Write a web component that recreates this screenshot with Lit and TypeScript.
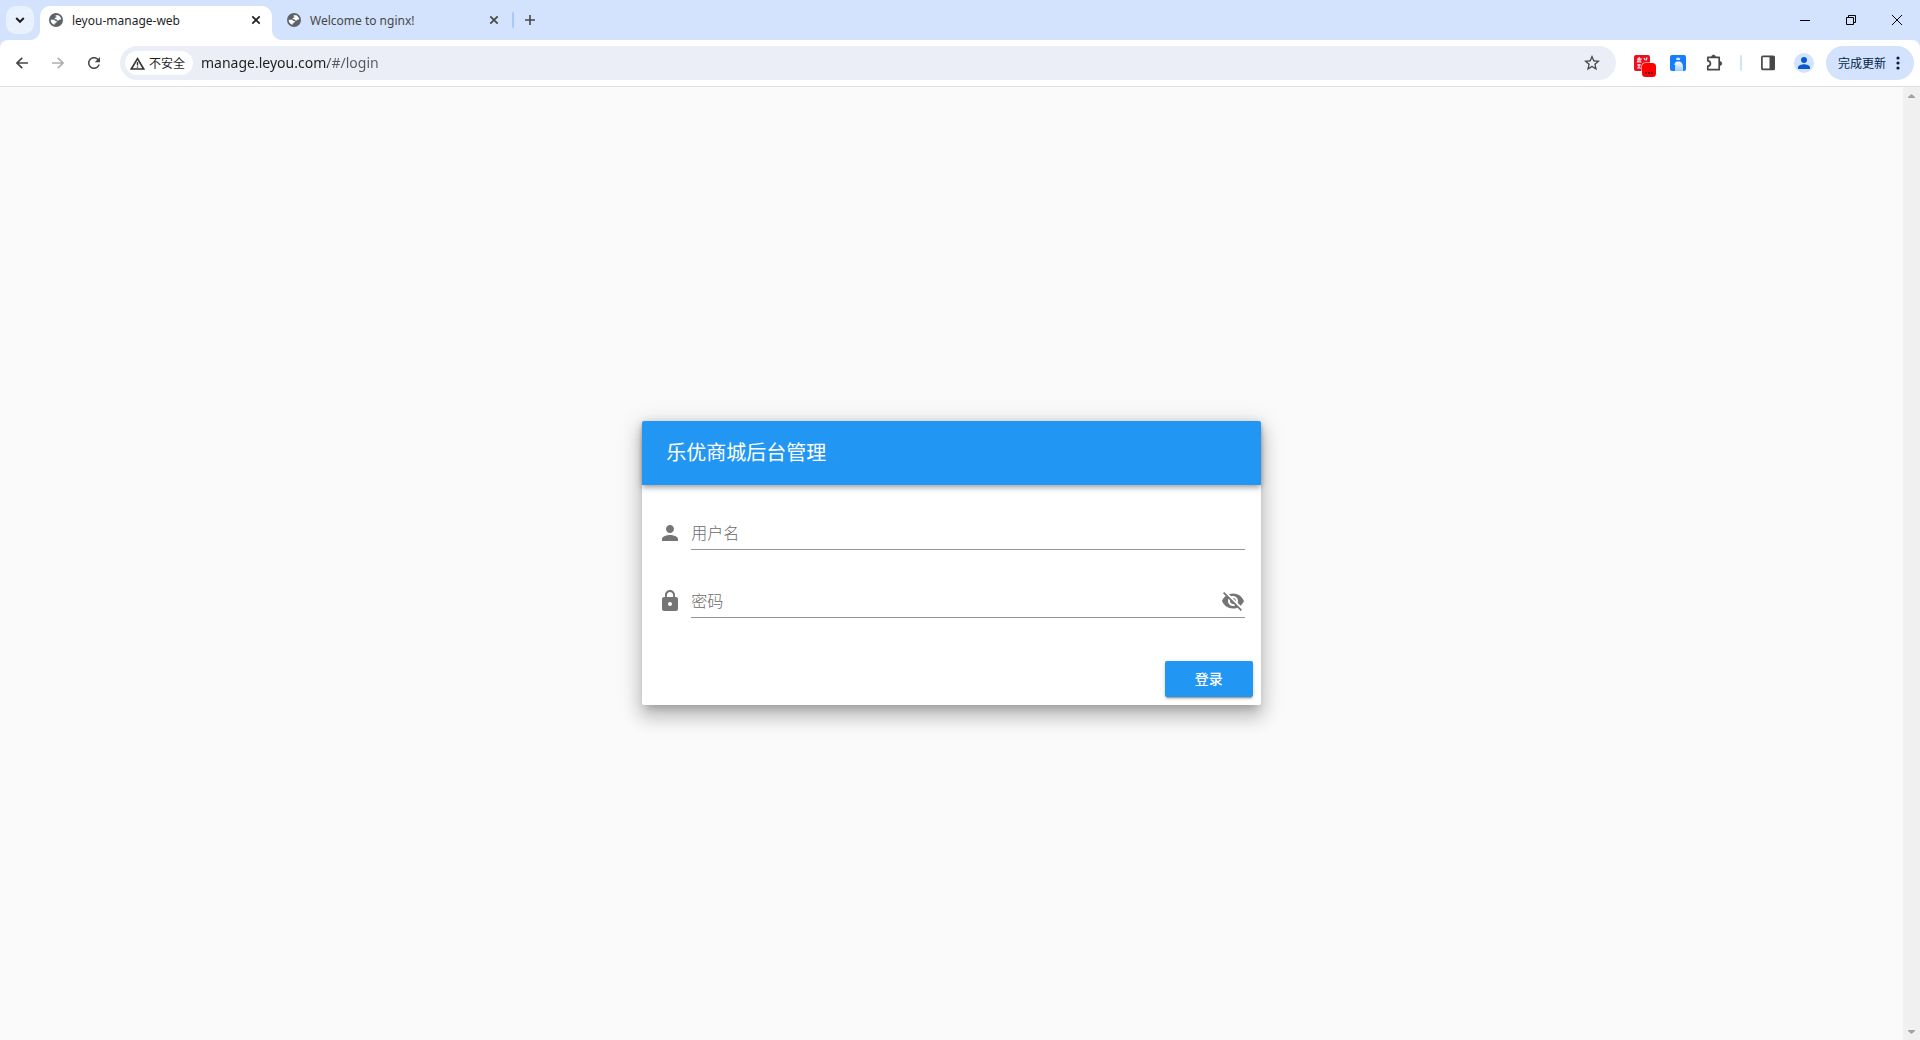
import { LitElement, html, css, svg } from "lit";
import { customElement, property, state } from "lit/decorators.js";

const globe = svg`<svg class="fav" viewBox="0 0 14 14" width="14" height="14" aria-hidden="true"><circle cx="7" cy="7" r="7" fill="#5f6368" /><path fill="#fff" d="M6.600 2.200h2.700c1.500.8 2.700 2.200 2.900 4.200H10.600l-.9 1H8.200L7.400 6.300H5.800V4.700h1.600V3.500h-.8zM1.700 6.800h3.500l1.300 1.100h1.200v1.500H6.600v1.200H5.400v1.300C3.200 11.200 1.600 9.300 1.700 6.800z" /></svg>`;

const base = css`
  * {
    box-sizing: border-box;
  }
  button,
  input {
    margin: 0;
    padding: 0;
    border: 0;
    background: none;
    color: inherit;
    font: inherit;
    outline: 0;
  }
  button {
    cursor: pointer;
  }
  svg {
    display: block;
  }
`;

@customElement("browser-tab")
export class BrowserTab extends LitElement {
  @property() label = "";
  @property({ type: Boolean, reflect: true }) active = false;

  static styles = [
    base,
    css`
      :host {
        display: flex;
        position: relative;
        box-sizing: border-box;
        align-items: center;
        width: 232px;
        height: 34px;
        padding: 0 8px 6px;
        color: #474747;
      }
      :host([active]) {
        background: #fff;
        border-radius: 10px 10px 0 0;
        color: #1f1f1f;
      }
      :host([active])::before,
      :host([active])::after {
        content: "";
        position: absolute;
        bottom: 0;
        width: 10px;
        height: 10px;
      }
      :host([active])::before {
        left: -10px;
        background: radial-gradient(circle at 0 0, transparent 9.5px, #fff 10.5px);
      }
      :host([active])::after {
        right: -10px;
        background: radial-gradient(circle at 100% 0, transparent 9.5px, #fff 10.5px);
      }
      .title {
        flex: 1;
        display: flex;
        align-items: center;
        gap: 9px;
        height: 28px;
        text-align: left;
        font-size: 12px;
      }
      .fav {
        margin-left: 1px;
      }
      .close {
        display: grid;
        place-items: center;
        width: 16px;
        height: 16px;
      }
    `,
  ];

  render() {
    return html`
      <button class="title">${globe}<span>${this.label}</span></button>
      <button class="close" aria-label="关闭">
        <svg width="10" height="10" viewBox="0 0 10 10" fill="none" stroke="currentColor" stroke-width="1.7"><path d="M1.300 1.300l7.400 7.400M8.700 1.300L1.300 8.700" /></svg>
      </button>
    `;
  }
}

@customElement("browser-bar")
export class BrowserBar extends LitElement {
  static styles = [
    base,
    css`
      :host {
        display: block;
        background: #d3e3fd;
        color: #1f1f1f;
      }
      .strip {
        display: flex;
        height: 40px;
        padding: 6px 0 0 6px;
      }
      .search {
        display: grid;
        place-items: center;
        width: 28px;
        height: 28px;
        margin-right: 6px;
        border-radius: 10px;
        background: #e9f1fe;
      }
      .tabs {
        display: flex;
        gap: 6px;
      }
      .divider {
        width: 2px;
        height: 16px;
        border-radius: 1px;
        background: #a8c7fa;
      }
      .strip .divider {
        margin: 6px 2px 0 2px;
      }
      .add {
        display: grid;
        place-items: center;
        width: 28px;
        height: 28px;
      }
      .controls {
        display: flex;
        margin: -6px 0 0 auto;
      }
      .control {
        display: grid;
        place-items: center;
        width: 46px;
        height: 40px;
        color: #000;
      }
      .toolbar {
        display: flex;
        align-items: center;
        height: 47px;
        padding: 0 6px 0 4px;
        background: #fff;
        border-bottom: 1px solid #dcdee0;
        border-radius: 8px 8px 0 0;
      }
      .nav {
        display: grid;
        place-items: center;
        width: 36px;
        height: 34px;
        color: #474747;
      }
      .nav.off {
        color: #b0b0b0;
      }
      .omnibox {
        flex: 1;
        display: flex;
        align-items: center;
        height: 34px;
        margin: 0 8px;
        padding: 0 5px;
        border-radius: 17px;
        background: #ebeef7;
      }
      .chip {
        display: flex;
        align-items: center;
        gap: 4px;
        width: 68px;
        height: 24px;
        padding-left: 5px;
        border-radius: 12px;
        background: #fff;
        font-size: 12px;
      }
      .url {
        flex: 1;
        height: 30px;
        margin-left: 8px;
        padding-bottom: 2px;
        font-size: 14px;
        color: transparent;
        background: linear-gradient(90deg, #1f1f1f 127px, #55585c 127px);
        -webkit-background-clip: text;
        background-clip: text;
      }
      .icon {
        display: grid;
        place-items: center;
        width: 36px;
        height: 34px;
        color: #474747;
      }
      .star {
        width: 38px;
      }
      .toolbar .divider {
        margin: 0 8px;
        background: #d3e3fd;
      }
      .update {
        display: flex;
        align-items: center;
        justify-content: space-between;
        width: 88px;
        height: 34px;
        margin-left: 4px;
        padding: 0 14px 0 12px;
        border-radius: 17px;
        background: #d3e3fd;
        color: #041e49;
        font-size: 12px;
      }
    `,
  ];

  render() {
    return html`
      <div class="strip">
        <button class="search" aria-label="搜索标签页">
          <svg width="10" height="8" viewBox="0 0 10 8" fill="none" stroke="#1f1f1f" stroke-width="2"><path d="M1.200 2l3.800 3.800L8.800 2" /></svg>
        </button>
        <div class="tabs">
          <browser-tab active label="leyou-manage-web"></browser-tab>
          <browser-tab label="Welcome to nginx!"></browser-tab>
        </div>
        <span class="divider"></span>
        <button class="add" aria-label="打开新的标签页">
          <svg width="10" height="10" viewBox="0 0 10 10" stroke="#474747" stroke-width="1.6"><path d="M5 0v10M0 5h10" /></svg>
        </button>
        <div class="controls">
          <button class="control" aria-label="最小化">
            <svg width="10" height="10" viewBox="0 0 10 10" stroke="currentColor"><path d="M0 5.500h10" /></svg>
          </button>
          <button class="control" aria-label="还原">
            <svg width="10" height="10" viewBox="0 0 10 10" fill="none" stroke="currentColor"><path d="M.5 2.500h7v7h-7zM2.500 2.500v-2h7v7h-2" /></svg>
          </button>
          <button class="control" aria-label="关闭窗口">
            <svg width="10" height="10" viewBox="0 0 10 10" stroke="currentColor"><path d="M0 0l10 10M10 0L0 10" /></svg>
          </button>
        </div>
      </div>
      <div class="toolbar">
        <button class="nav" aria-label="返回">
          <svg width="12" height="12" viewBox="0 0 12 12" fill="none" stroke="currentColor" stroke-width="1.700"><path d="M12 6H1.200M6.200 .8L1 6l5.200 5.200" /></svg>
        </button>
        <button class="nav off" aria-label="前进">
          <svg width="12" height="12" viewBox="0 0 12 12" fill="none" stroke="currentColor" stroke-width="1.700"><path d="M0 6h10.800M5.800 .8L11 6l-5.200 5.200" /></svg>
        </button>
        <button class="nav" aria-label="重新加载">
          <svg width="12" height="12" viewBox="4 4 16 16"><path fill="currentColor" d="M17.650 6.350C16.200 4.900 14.210 4 12 4c-4.420 0-7.990 3.580-7.990 8s3.570 8 7.990 8c3.730 0 6.840-2.550 7.730-6h-2.080c-.82 2.330-3.040 4-5.650 4-3.310 0-6-2.690-6-6s2.690-6 6-6c1.660 0 3.140.69 4.220 1.780L13 11h7V4l-2.350 2.350z" /></svg>
        </button>
        <div class="omnibox">
          <button class="chip">
            <svg width="15" height="13" viewBox="0 0 15 13" fill="none"><path d="M7.500 1.600L1.300 12h12.400z" stroke="#333" stroke-width="1.600" /><path d="M7.500 5v3.500M7.500 9.400v1.400" stroke="#333" stroke-width="1.400" /></svg>
            <span>不安全</span>
          </button>
          <input class="url" type="text" aria-label="地址" value="manage.leyou.com/#/login" />
          <button class="icon star" aria-label="收藏">
            <svg width="16" height="16" viewBox="2 2 20 20"><path fill="currentColor" d="M22 9.240l-7.190-.62L12 2 9.190 8.630 2 9.240l5.460 4.730L5.820 21 12 17.270 18.180 21l-1.630-7.030L22 9.240zM12 15.400l-3.760 2.270 1-4.280-3.320-2.880 4.380-.38L12 6.100l1.710 4.040 4.380.38-3.320 2.880 1 4.280L12 15.400z" /></svg>
          </button>
        </div>
        <button class="icon" aria-label="翻译扩展">
          <svg width="28" height="30" viewBox="-4 0 28 30">
            <rect x="2" y="7" width="16" height="16" rx="2" fill="#ea1020" />
            <path d="M5 11h5M7.500 9l-2 5h4M8 11v3.500M12 10l1 2M15 9.500l-1 3M5 17h4M7 16v4M5 20h4" stroke="#fff" stroke-width="1.200" fill="none" opacity=".9" />
            <rect x="9.500" y="14.500" width="15" height="15" rx="4" fill="#fff" />
            <rect x="10" y="15" width="14" height="14" rx="3.500" fill="#f00" />
            <path d="M13 25h2M16 25h2M19 25h2" stroke="#400" stroke-width="1.500" />
          </svg>
        </button>
        <button class="icon" aria-label="助手扩展">
          <svg width="16" height="16" viewBox="0 0 16 16">
            <defs><linearGradient id="bird" x1="0" y1="0" x2="0" y2="1"><stop offset="0" stop-color="#fff" /><stop offset="1" stop-color="#9fccff" /></linearGradient></defs>
            <rect width="16" height="16" rx="2" fill="#167dff" />
            <path d="M6 2.500l1.200 1L8 2l1 1.500 1.300-1-.4 2.500H6.500z" fill="#fff" opacity=".9" />
            <path d="M3.800 9.500L5 8.200C5.500 6.800 6.800 6.500 8.200 6.500c3 0 4.800 2 4.800 5.500v4H5v-3.500c0-1 .2-1.600.4-2.500z" fill="url(#bird)" />
          </svg>
        </button>
        <button class="icon" aria-label="扩展程序">
          <svg width="18" height="18" viewBox="0 0 18 18">
            <path d="M2.800 3.300h11.400v12.400H2.800v-3.500c3.500-.4 3.500-5 0-5.400z" fill="none" stroke="currentColor" stroke-width="1.700" stroke-linejoin="round" />
            <path d="M6.500 3a2 2 0 0 1 4 0zM14.800 7.500a2 2 0 0 1 0 4z" fill="currentColor" stroke="currentColor" stroke-width=".6" />
          </svg>
        </button>
        <span class="divider"></span>
        <button class="icon" aria-label="侧边栏">
          <svg width="14" height="16" viewBox="0 0 14 16"><rect x=".9" y="1.400" width="12.200" height="13" rx="1" fill="none" stroke="currentColor" stroke-width="1.700" /><path d="M8.500 1h5v14h-5z" fill="currentColor" /></svg>
        </button>
        <button class="icon" aria-label="个人资料">
          <svg width="20" height="20" viewBox="0 0 20 20"><circle cx="10" cy="10" r="10" fill="#d3e3fd" /><circle cx="10" cy="7" r="3" fill="#0b57d0" /><path d="M4 16v-1.700c0-2 4-3 6-3s6 1 6 3V16z" fill="#0b57d0" /></svg>
        </button>
        <button class="update">
          <span>完成更新</span>
          <svg width="4" height="14" viewBox="0 0 4 14" fill="#041e49"><circle cx="2" cy="2" r="1.600" /><circle cx="2" cy="7" r="1.600" /><circle cx="2" cy="12" r="1.600" /></svg>
        </button>
      </div>
    `;
  }
}

@customElement("login-card")
export class LoginCard extends LitElement {
  @state() private reveal = false;

  static styles = [
    base,
    css`
      :host {
        display: block;
        background: #fff;
        border-radius: 2px;
        color: #757575;
        box-shadow: 0 7px 8px -4px rgba(0, 0, 0, 0.2), 0 12px 17px 2px rgba(0, 0, 0, 0.14),
          0 5px 22px 4px rgba(0, 0, 0, 0.12);
      }
      .bar {
        display: flex;
        align-items: center;
        height: 64px;
        padding: 0 24px;
        border-radius: 2px 2px 0 0;
        background: #2196f3;
        color: #fff;
        box-shadow: 0 2px 4px -1px rgba(0, 0, 0, 0.2), 0 4px 5px 0 rgba(0, 0, 0, 0.14),
          0 1px 10px 0 rgba(0, 0, 0, 0.12);
      }
      .heading {
        margin: 0;
        font-size: 20px;
        line-height: 28px;
        font-weight: 400;
      }
      .fields {
        display: grid;
        gap: 37px;
        padding: 34px 16px 35px;
      }
      .field {
        display: flex;
        gap: 9px;
      }
      .lead {
        padding-top: 2px;
      }
      .line {
        flex: 1;
        display: flex;
        height: 31px;
        border-bottom: 1px solid #949494;
      }
      .text {
        flex: 1;
        min-width: 0;
        height: 28px;
        font-size: 16px;
        font-weight: 300;
        color: #212121;
      }
      .text::placeholder {
        color: #6a6a6a;
        opacity: 1;
      }
      .eye {
        width: 24px;
        height: 28px;
      }
      .actions {
        display: flex;
        justify-content: flex-end;
        padding: 8px;
      }
      .submit {
        width: 88px;
        height: 36px;
        padding-bottom: 2px;
        border-radius: 2px;
        background: #2196f3;
        color: #fff;
        font-size: 14px;
        font-weight: 500;
        box-shadow: 0 3px 1px -2px rgba(0, 0, 0, 0.2), 0 2px 2px 0 rgba(0, 0, 0, 0.14),
          0 1px 5px 0 rgba(0, 0, 0, 0.12);
      }
    `,
  ];

  render() {
    return html`
      <header class="bar"><h1 class="heading">乐优商城后台管理</h1></header>
      <form @submit=${(e: Event) => e.preventDefault()}>
        <div class="fields">
          <div class="field">
            <label class="lead" for="user" aria-label="用户名">
              <svg width="24" height="24" viewBox="0 0 24 24" fill="#757575"><path d="M12 12c2.210 0 4-1.790 4-4s-1.790-4-4-4-4 1.790-4 4 1.790 4 4 4zm0 2c-2.670 0-8 1.340-8 4v2h16v-2c0-2.660-5.330-4-8-4z" /></svg>
            </label>
            <div class="line"><input class="text" id="user" type="text" placeholder="用户名" /></div>
          </div>
          <div class="field">
            <label class="lead" for="pass" aria-label="密码">
              <svg width="24" height="24" viewBox="0 0 24 24" fill="#757575"><path d="M18 8h-1V6c0-2.760-2.240-5-5-5S7 3.240 7 6v2H6c-1.100 0-2 .9-2 2v10c0 1.100.9 2 2 2h12c1.100 0 2-.9 2-2V10c0-1.100-.9-2-2-2zm-6 9c-1.100 0-2-.9-2-2s.9-2 2-2 2 .9 2 2-.9 2-2 2zm3.100-9H8.900V6c0-1.710 1.390-3.100 3.100-3.100 1.710 0 3.100 1.390 3.100 3.100v2z" /></svg>
            </label>
            <div class="line">
              <input class="text" id="pass" type=${this.reveal ? "text" : "password"} placeholder="密码" />
              <button class="eye" type="button" aria-label="显示密码" @click=${() => (this.reveal = !this.reveal)}>
                <svg width="24" height="24" viewBox="0 0 24 24" fill="#757575"><path d="M12 7c2.760 0 5 2.240 5 5 0 .65-.13 1.260-.36 1.830l2.920 2.920c1.510-1.260 2.700-2.890 3.430-4.750-1.730-4.390-6-7.500-11-7.500-1.400 0-2.740.25-3.980.7l2.160 2.160C10.740 7.130 11.350 7 12 7zM2 4.270l2.280 2.280.46.46C3.080 8.300 1.780 10.020 1 12c1.730 4.390 6 7.500 11 7.500 1.550 0 3.030-.3 4.380-.84l.42.42L19.730 22 21 20.730 3.270 3 2 4.270zM7.530 9.800l1.550 1.550c-.05.21-.08.43-.08.65 0 1.660 1.340 3 3 3 .22 0 .44-.03.65-.08l1.550 1.550c-.67.33-1.410.53-2.200.53-2.760 0-5-2.240-5-5 0-.79.2-1.530.53-2.200zm4.310-.78l3.150 3.150.02-.16c0-1.660-1.340-3-3-3l-.17.01z" /></svg>
              </button>
            </div>
          </div>
        </div>
        <div class="actions"><button class="submit" type="submit">登录</button></div>
      </form>
    `;
  }
}

@customElement("app-root")
export class AppRoot extends LitElement {
  static styles = [
    base,
    css`
      :host {
        display: flex;
        flex-direction: column;
        min-height: 100vh;
        font-family: "Noto Sans", "Noto Sans CJK SC", sans-serif;
      }
      .view {
        flex: 1;
        display: flex;
        background: #fafafa;
      }
      .page {
        flex: 1;
        display: flex;
        align-items: center;
        justify-content: center;
        padding: 23px 24px 24px;
      }
      .card {
        flex: 0 0 calc(100% / 3);
      }
      .scroll {
        display: flex;
        flex-direction: column;
        justify-content: space-between;
        width: 17px;
        background: #f0f0f0;
      }
      .arrow {
        display: grid;
        place-items: center;
        width: 17px;
        height: 17px;
      }
    `,
  ];

  render() {
    return html`
      <browser-bar></browser-bar>
      <main class="view">
        <div class="page"><login-card class="card"></login-card></div>
        <div class="scroll">
          <span class="arrow"><svg width="7" height="4" viewBox="0 0 7 4" fill="#a3a3a3"><path d="M0 4v-1l3.500-3L7 3v1z" /></svg></span>
          <span class="arrow"><svg width="7" height="4" viewBox="0 0 7 4" fill="#a3a3a3"><path d="M0 0v1l3.500 3L7 1V0z" /></svg></span>
        </div>
      </main>
    `;
  }
}
